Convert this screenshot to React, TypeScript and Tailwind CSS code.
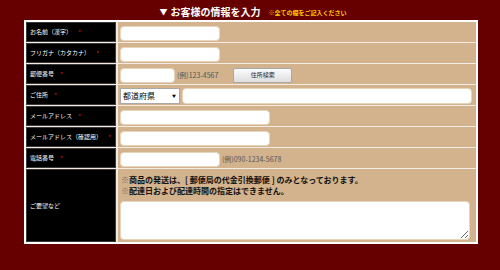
import React from "react";

const jp = { fontFamily: '"Noto Sans CJK JP", "Noto Sans", sans-serif' };

function Label({ text, required = true }: { text: string; required?: boolean }) {
  return (
    <div className="bg-black flex items-center pl-[3px] text-white text-[6px] leading-none border border-[#3a3a3a]">
      <span>{text}</span>
      {required && <span className="text-[#d01010] text-[7px] ml-[6px] leading-none">*</span>}
    </div>
  );
}

function Cell({ children, className = "" }: { children?: React.ReactNode; className?: string }) {
  return <div className={`bg-[#d2b38e] flex items-center pl-[2px] pr-[4px] ${className}`}>{children}</div>;
}

const inputCls =
  "h-[15px] bg-white border border-[#e6d6bd] rounded-[4px] mt-[2px] outline-none";

export default function App() {
  return (
    <div className="w-[500px] h-[270px] bg-[#660000] overflow-hidden" style={jp}>
      <div className="h-[20px] flex items-center justify-center pt-[4px] pl-[6px]">
        <span className="text-white text-[8px] mr-[3px] leading-none">▼</span>
        <span className="text-white text-[10px] font-bold leading-none">お客様の情報を入力</span>
        <span className="text-[#ffcc00] text-[6px] font-bold leading-none ml-[8px] mt-[1px]">
          <span className="text-[#ff9900]">※</span>全ての欄をご記入ください
        </span>
      </div>
      <div className="ml-[24px] w-[454px] bg-white p-[2px]">
        <div className="grid grid-cols-[90px_358px] gap-x-[2px] gap-y-[1px] bg-[#f4ece2]" style={{ gridTemplateRows: "20px 20px 20px 20px 20px 20px 20px 73px" }}>
          <Label text="お名前（漢字）" />
          <Cell>
            <input className={`${inputCls} w-[100px]`} />
          </Cell>

          <Label text="フリガナ（カタカナ）" />
          <Cell>
            <input className={`${inputCls} w-[100px]`} />
          </Cell>

          <Label text="郵便番号" />
          <Cell>
            <input className={`${inputCls} w-[55px]`} />
            <span className="text-[7px] text-[#555] ml-[2px] mt-[2px] leading-none">(例)123-4567</span>
            <div className="ml-[15px] mt-[2px] w-[59px] h-[15px] border border-[#a8a8a8] rounded-[2px] bg-gradient-to-b from-[#fbfbfb] to-[#dedede] flex items-center justify-center text-[6px] text-[#222] leading-none">
              住所検索
            </div>
          </Cell>

          <Label text="ご住所" />
          <Cell>
            <div className="w-[60px] h-[16px] mt-[2px] bg-white border border-[#a9a9a9] flex items-center justify-between pl-[2px] pr-[3px]">
              <span className="text-[8px] text-black leading-none">都道府県</span>
              <span className="text-[4px] text-black leading-none">▼</span>
            </div>
            <input className="ml-[2px] w-[290px] h-[16px] mt-[2px] bg-white border border-[#e6d6bd] rounded-[4px] outline-none" />
          </Cell>

          <Label text="メールアドレス" />
          <Cell>
            <input className={`${inputCls} w-[150px]`} />
          </Cell>

          <Label text="メールアドレス（確認用）" />
          <Cell>
            <input className={`${inputCls} w-[150px]`} />
          </Cell>

          <Label text="電話番号" />
          <Cell>
            <input className={`${inputCls} w-[100px]`} />
            <span className="text-[7px] text-[#555] ml-[2px] mt-[2px] leading-none">(例)090-1234-5678</span>
          </Cell>

          <Label text="ご要望など" required={false} />
          <div className="bg-[#d2b38e] flex flex-col pl-[2px] pr-[4px] pt-[5px]">
            <div className="text-[8px] leading-[11px] text-[#111] font-bold pl-[1px]">
              <div>
                <span className="text-[#666]">※</span>商品の発送は、[ 郵便局の代金引換郵便 ] のみとなっております。
              </div>
              <div>
                <span className="text-[#666]">※</span>配達日および配達時間の指定はできません。
              </div>
            </div>
            <textarea className="mt-[5px] w-[350px] h-[39px] bg-white border border-[#e6d6bd] rounded-[4px] outline-none" />
          </div>
        </div>
      </div>
    </div>
  );
}
